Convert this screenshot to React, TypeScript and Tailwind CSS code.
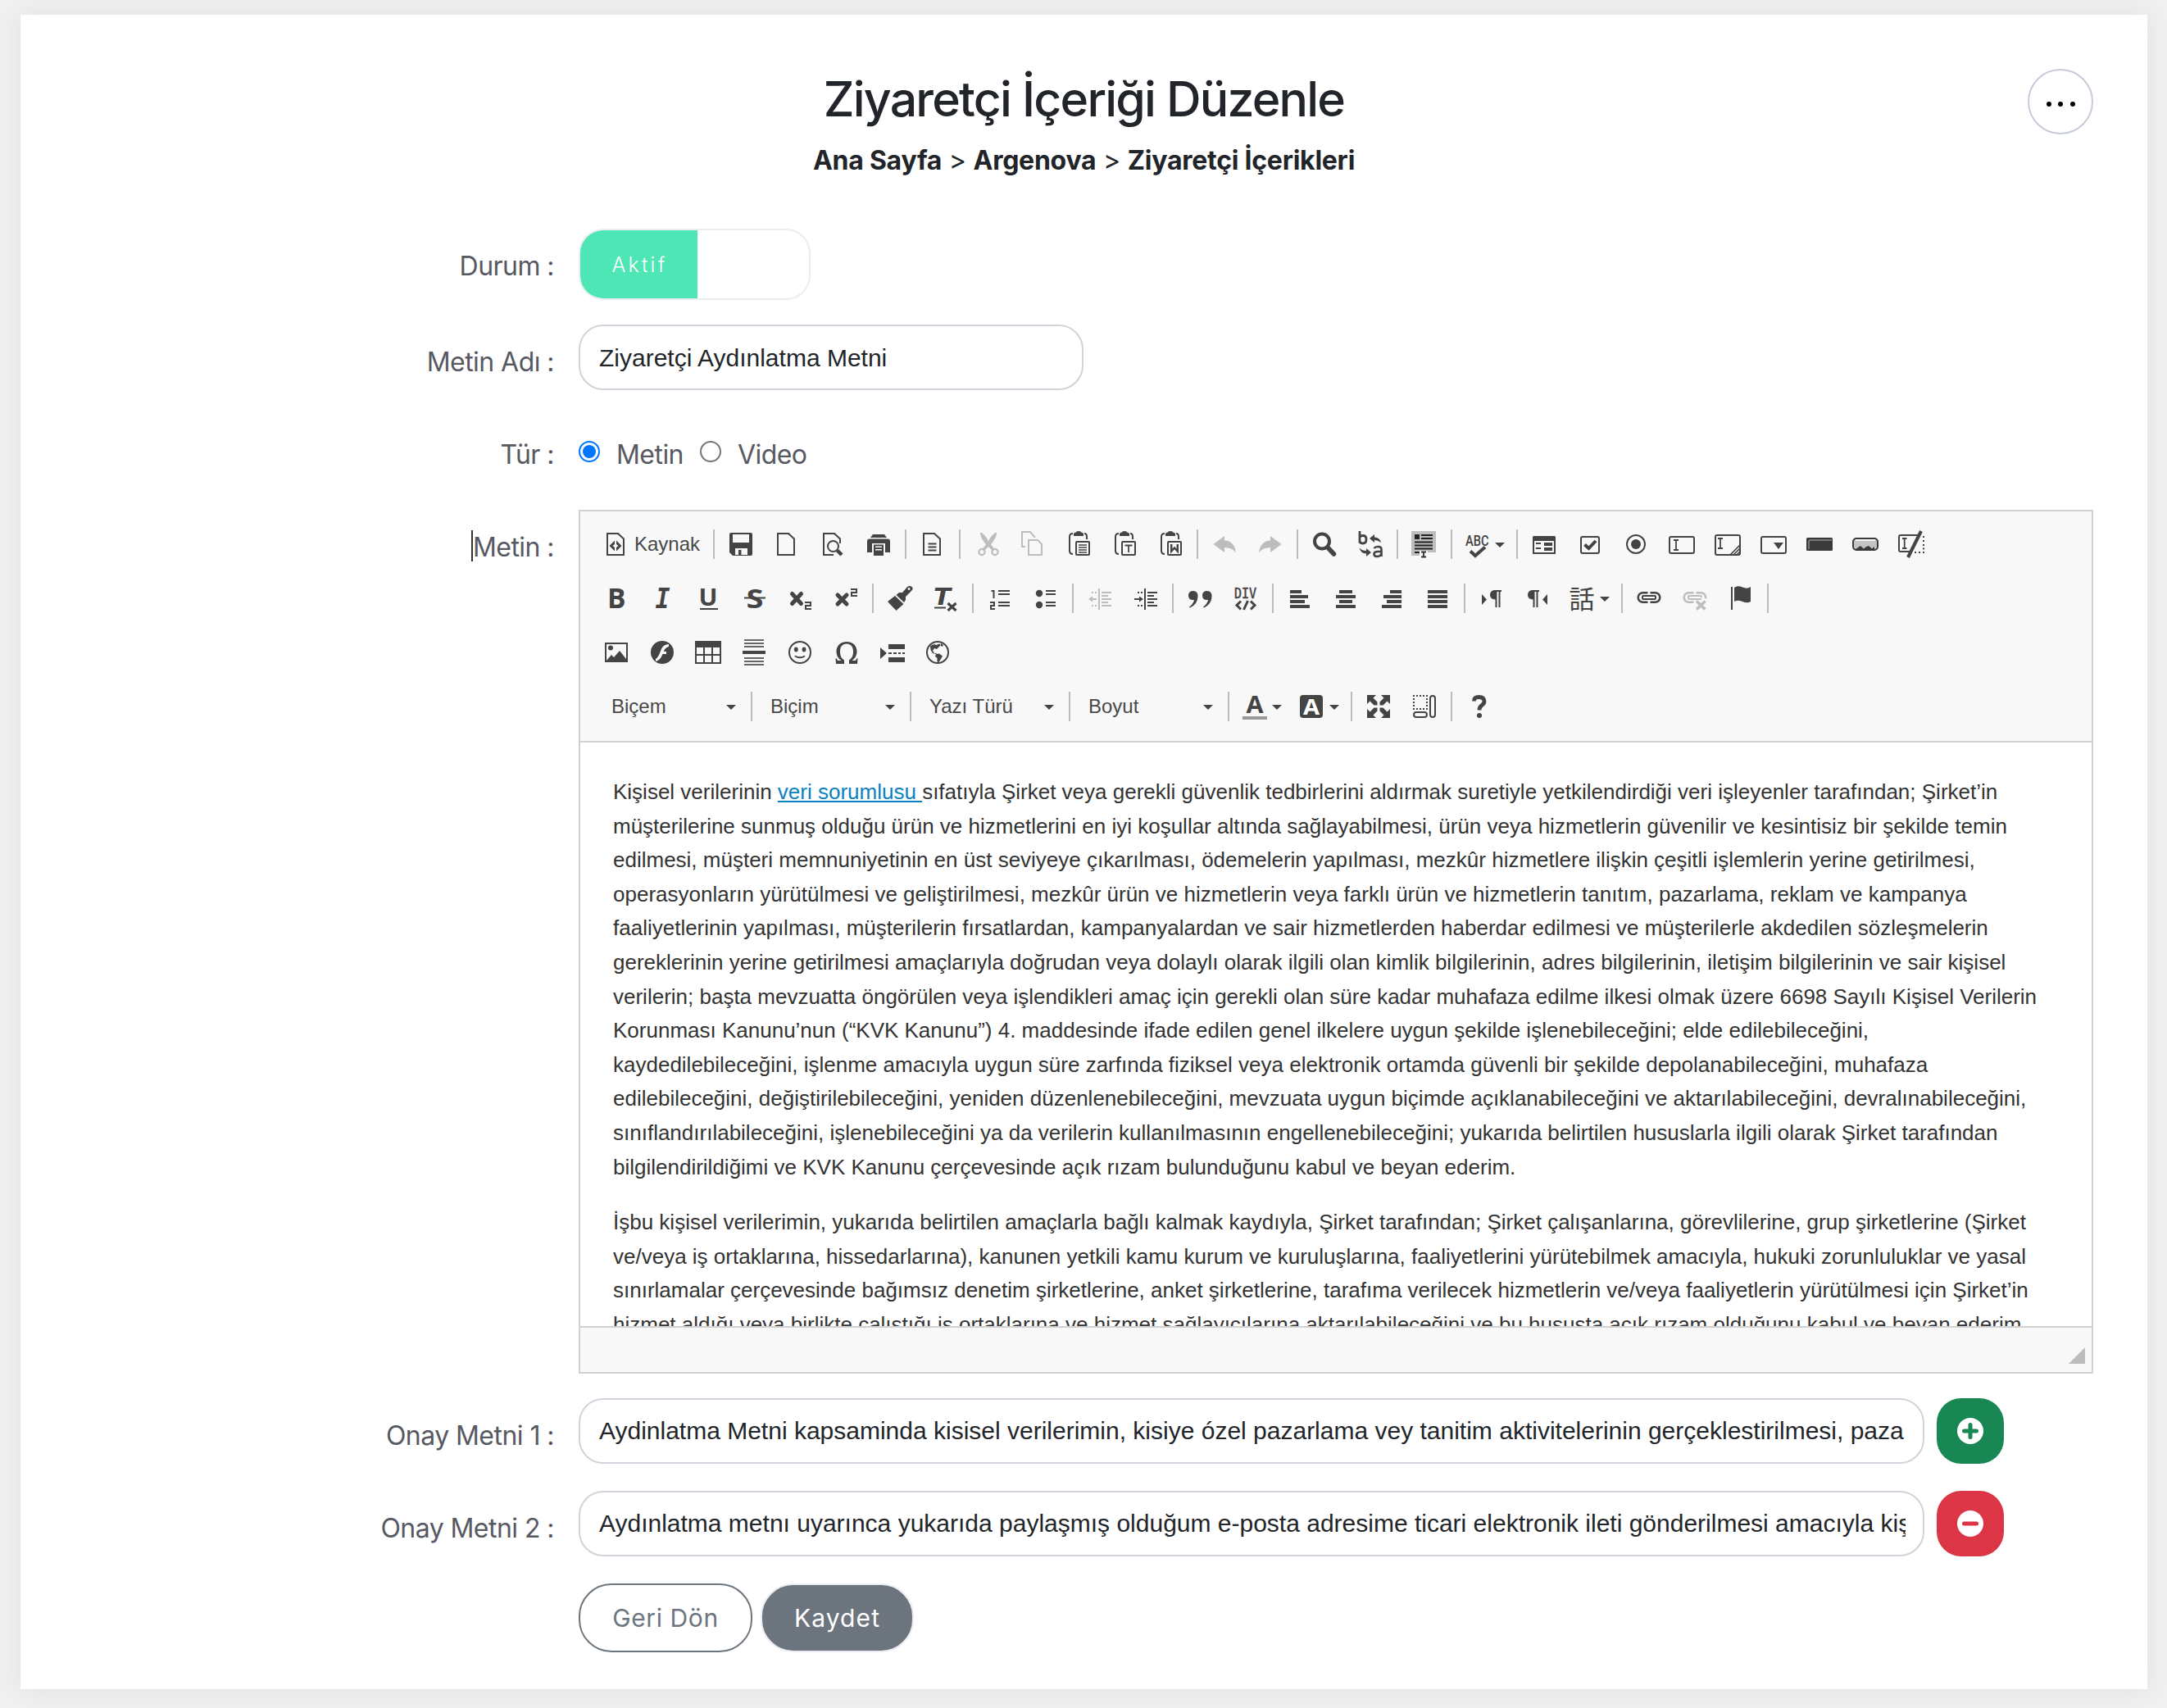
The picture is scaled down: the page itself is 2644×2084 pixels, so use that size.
import React from "react";

const MUTED = "#bdbdbd";
const PAPER = "#f8f8f8";

function Ic({ children, muted }: { children: React.ReactNode; muted?: boolean }) {
  return (
    <svg viewBox="0 0 32 32" className={muted ? "size-8 shrink-0 overflow-visible text-[#bdbdbd]" : "size-8 shrink-0 overflow-visible text-[#444444]"} fill="currentColor" stroke="none">
      {children}
    </svg>
  );
}

function S({ d, w = 2, c = "currentColor", cap = "butt" }: { d: string; w?: number; c?: string; cap?: "butt" | "round" }) {
  return <path d={d} fill="none" stroke={c} strokeWidth={w} strokeLinecap={cap} />;
}

function T({ x, y, s, w, children, f = "Open Sans", weight = 700, italic, c }: { x: number; y: number; s: number; w?: number; children: string; f?: string; weight?: number; italic?: boolean; c?: string }) {
  return (
    <text x={x} y={y} fontSize={s} fontFamily={`"${f}", sans-serif`} fontWeight={weight} fontStyle={italic ? "italic" : "normal"} textLength={w} lengthAdjust="spacingAndGlyphs" fill={c ?? "currentColor"}>
      {children}
    </text>
  );
}

const DOC = "M5 3H18L25 9.5V29H5Z";
const CLIP = "M10 3q1-1.5 3-1.5q0-1.5 3-1.5t3 1.5q2 0 3 1.5v3H10Z";
const BOARD = "M9 3Q5 3 5 7V24Q5 28 9 28M23 3Q26 3 26 7V10";

const icons: Record<string, React.ReactNode> = {
  source: <Ic><S d={DOC} /><path d="M14 11.5V16l-2.5 2 2.5 2v4.5L7.5 18ZM16 11.5V16l2.5 2-2.5 2v4.5L22.5 18Z" /></Ic>,
  save: <Ic><path fillRule="evenodd" d="M4 2H28Q30 2 30 4V28Q30 30 28 30H24V21H9V30H6L2 26V4Q2 2 4 2ZM6 4V14H26V4Z" /><path d="M13 23H16.5V30H13ZM9 29H24V30H9Z" /></Ic>,
  newpage: <Ic><S d={DOC} /></Ic>,
  preview: <Ic><S d="M17 29H5V3H18L25 9.5V15" /><circle cx="16.5" cy="18.5" r="6.5" fill={PAPER} stroke="currentColor" strokeWidth="2" /><S d="M21.5 23.5L27 29" w={4.5} /></Ic>,
  print: <Ic><path d="M9 4H23L26 8H6ZM5 9.5H27Q30 9.5 30 12.5V26H24V15H8V26H2V12.5Q2 9.5 5 9.5Z" /><path d="M10 16.5H22V30H10Z" /><path d="M12 18.5H20V20H12ZM12 22H20V23.5H12Z" fill={PAPER} /></Ic>,
  templates: <Ic><S d={DOC} /><S d="M10.5 15.5H20.5M10.5 19.5H20.5M10.5 23.5H20.5" /></Ic>,
  cut: <Ic muted><path d="M8 2L10 2Q17 8 18 13Q19 8 26 2L28 2Q29 6 21 16.5L26 22.5L23 24L18 19L13 24L10 22.5L15 16.5Q7 6 8 2Z" /><circle cx="10" cy="25.5" r="3.6" fill="none" stroke="currentColor" strokeWidth="2.2" /><circle cx="26" cy="25.5" r="3.6" fill="none" stroke="currentColor" strokeWidth="2.2" /></Ic>,
  copy: <Ic muted><S d="M7 19H3V1H13L19 8" /><S d="M11 11H22L27 16V29H11Z" /></Ic>,
  paste: <Ic><S d={BOARD} /><path d={CLIP} /><rect x="13" y="13" width="16" height="16" rx="1" fill="none" stroke="currentColor" strokeWidth="2" /><S d="M16 17H26M16 20H26M16 23H26M16 26H26" w={1.5} /></Ic>,
  pastetext: <Ic><S d={BOARD} /><path d={CLIP} /><rect x="13" y="13" width="16" height="16" rx="1" fill="none" stroke="currentColor" strokeWidth="2" /><S d="M16.5 17.5H25.5M21 17.5V26" w={1.8} /></Ic>,
  pasteword: <Ic><S d={BOARD} /><path d={CLIP} /><rect x="13" y="13" width="16" height="16" rx="1" fill="none" stroke="currentColor" strokeWidth="2" /><S d="M17.2 16V24.5L21 20.5L24.8 24.5V16" w={2.5} /></Ic>,
  undo: <Ic muted><path d="M2.5 16L16 6V11.5Q28 12 30 26Q25 20 16 20V26Z" /></Ic>,
  redo: <Ic muted><path d="M29.5 16L16 6V11.5Q4 12 2 26Q7 20 16 20V26Z" /></Ic>,
  find: <Ic><circle cx="13" cy="12.5" r="9" fill="none" stroke="currentColor" strokeWidth="4" /><S d="M20 20L27.5 28" w={5.5} cap="round" /></Ic>,
  replace: <Ic><S d="M3 0V14.5M3 7.5Q4 5.5 7 5.5Q11 5.5 11 10Q11 15 7 15Q4 15 3 13" w={2.8} /><S d="M20.5 21Q22 19 25 19Q29.5 19 29.5 22V31M29.5 25H25Q20.5 25 20.5 28Q20.5 31 24 31Q28 31 29.5 28" w={2.6} /><path d="M15 9L21 4V7.5Q28 8 29 14Q25 11 21 11V14ZM17 26L11 31V27.5Q4 27 2.5 20.5Q6 24 11 24V21Z" /></Ic>,
  selectall: <Ic><path d="M0 0H30V26H20V30H0Z" fill={MUTED} /><path d="M4 4H10V10H4ZM12 4H26V6H12ZM12 8H26V10H12ZM4 12.5H26V14.5H4ZM4 16.5H26V18.5H4ZM4 20.5H26V22.5H4ZM4 25H10V27H4Z" fill="#222" /><path d="M10 24H20V32H10Z" fill={PAPER} /><S d="M12 25.5H18M12 31.5H18M15 25.5V31.5" c="#333" w={1.8} /></Ic>,
  spell: <Ic><T x={0} y={18} s={19} w={28.5} f="Roboto" weight={500}>ABC</T><S d="M6 24.5L12 30L24 19.5" w={4} /></Ic>,
  form: <Ic><path fillRule="evenodd" d="M3 6H29L30 7V28H2V7ZM4 12V26H28V12Z" /><path d="M6 14H12V16H6ZM6 20H12V22H6ZM16 14H26V18H16ZM16 20H26V24H16Z" /></Ic>,
  checkbox: <Ic><rect x="5" y="7" width="22" height="20" rx="2" fill="none" stroke="currentColor" strokeWidth="2" /><S d="M9.5 16.5L14.5 21L23 12" w={4} /></Ic>,
  radio: <Ic><circle cx="16" cy="16" r="11" fill="none" stroke="currentColor" strokeWidth="2" /><circle cx="16" cy="16" r="6" /></Ic>,
  textfield: <Ic><rect x="1" y="7" width="30" height="20" rx="2" fill="none" stroke="currentColor" strokeWidth="2" /><S d="M6 11H12M6 23H12M9 11V23" w={1.8} /></Ic>,
  textarea: <Ic><rect x="1" y="5" width="30" height="24" rx="2" fill="none" stroke="currentColor" strokeWidth="2" /><S d="M4 9H10M4 21H10M7 9V21" w={1.8} /><S d="M19 29L31 17M23 29L31 21M27 29L31 25" w={1.7} /></Ic>,
  select: <Ic><rect x="1" y="7" width="30" height="20" rx="2" fill="none" stroke="currentColor" strokeWidth="2" /><path d="M16 14H28L22 22Z" /></Ic>,
  button: <Ic><rect x="0" y="8" width="32" height="16" rx="1.5" fill="#3a3a3a" /><S d="M3 22V13Q3 11 5 11H31" c="#8a8a8a" w={1.5} /></Ic>,
  imagebutton: <Ic><rect x="1" y="9" width="30" height="14" rx="4" fill="#c4c4c4" stroke="#3a3a3a" strokeWidth="2" /><path d="M4 10H28V12H4Z" fill={PAPER} /><path d="M4 22L7 20L10 18L14 21.500L17 19L20 18L24 21.500L27 19V24H4Z" fill="#3a3a3a" /></Ic>,
  hidden: <Ic><S d="M26 5H3Q1 5 1 7V23Q1 25 3 25H15" /><S d="M5 9H10.5M5 21H10.5M7.7 9V21" w={1.8} /><S d="M12 32L28 0" w={4} /><path d="M30 6H32V8H30ZM30 11H32V13H30ZM30 16H32V18H30ZM30 20.5H32V22.5H30ZM30 25H32V27H30ZM25 25H27V27H25ZM20 25H22V27H20Z" /></Ic>,
  bold: <Ic><T x={5} y={28} s={33.5}>B</T></Ic>,
  italic: <Ic><T x={7.5} y={28} s={33} w={18} f="DejaVu Sans Mono" italic>I</T></Ic>,
  underline: <Ic><T x={4.5} y={25} s={29} w={23}>U</T><path d="M6 28H28V30H6Z" /></Ic>,
  strike: <Ic><T x={6.5} y={27.5} s={33} w={21}>S</T><path d="M4 14.5H30V16.5H4Z" /></Ic>,
  sub: <Ic><S d="M6.5 10.5L17.500 22.5M17.500 10.5L6.5 22.5" w={5} cap="round" /><S d="M22 21H29V25H23V29H30" w={2} /></Ic>,
  sup: <Ic><S d="M6 12L17 23M17 12L6 23" w={5} cap="round" /><S d="M22 5H29V9H23V13H30" w={2} /></Ic>,
  brush: <Ic><path d="M1 20L10 13L20.5 23L11.5 31Z" /><path fillRule="evenodd" d="M11.5 12L15 9H19L25 2Q28 0 30.5 2T30 7L23 14V18L21 21ZM27 3A1.5 1.5 0 1 0 27.1 3Z" /></Ic>,
  removeformat: <Ic><T x={1} y={24} s={28} f="DejaVu Sans" w={21} italic>T</T><path d="M2 26.5H16V28.5H2Z" /><S d="M18.5 22L28.5 31M28.5 22L18.5 31" w={3.2} /></Ic>,
  numbered: <Ic><S d="M5.5 7H8.5V16M4 21H9V25H5V29H10" /><path d="M14 6H28V8H14ZM14 10H28V12H14ZM14 20H28V22H14ZM14 24H28V26H14Z" /></Ic>,
  bulleted: <Ic><circle cx="8" cy="10" r="4.2" /><circle cx="8" cy="24" r="4.2" /><path d="M16 6H28V8H16ZM16 10H28V12H16ZM16 20H28V22H16ZM16 24H28V26H16Z" /></Ic>,
  outdent: <Ic muted><path d="M14 4H16V30H14ZM18 8H30V10H18ZM18 12H26V14H18ZM18 16H30V18H18ZM18 20H26V22H18ZM18 24H30V26H18ZM2 17L7 13.5V16H12V18H7V20.5ZM6 8H8V10H6ZM10 8H12V10H10ZM6 24H8V26H6ZM10 24H12V26H10Z" /></Ic>,
  indent: <Ic><path d="M14 4H16V30H14ZM18 8H30V10H18ZM18 12H26V14H18ZM18 16H30V18H18ZM18 20H26V22H18ZM18 24H30V26H18ZM13 17L8 13.5V16H2V18H8V20.5ZM6 8H8V10H6ZM10 8H12V10H10ZM6 24H8V26H6ZM10 24H12V26H10Z" /></Ic>,
  quote: <Ic><path d="M8 7Q2 7 2 12.5T7.5 18H9Q8 23 3 26.5L4 27.5Q13.5 23 13.5 13.5Q13.5 7 8 7ZM25 7Q19 7 19 12.5T24.5 18H26Q25 23 20 26.5L21 27.5Q30.5 23 30.5 13.5Q30.5 7 25 7Z" /></Ic>,
  div: <Ic><g stroke="currentColor" strokeWidth="0.6"><T x={2} y={16} s={18} w={27} f="DejaVu Sans Mono" weight={400}>DIV</T></g><S d="M10 19.5L5 24.5L10 29.5M22 19.5L27 24.5L22 29.5" w={3} /><S d="M13.5 30L18.5 19" w={3} /></Ic>,
  left: <Ic><path d="M4 6H18V10H4ZM4 12H26V16H4ZM4 18H22V22H4ZM4 24H28V28H4Z" /></Ic>,
  center: <Ic><path d="M8 6H24V10H8ZM4 12H28V16H4ZM8 18H24V22H8ZM4 24H28V28H4Z" /></Ic>,
  right: <Ic><path d="M14 6H28V10H14ZM6 12H28V16H6ZM10 18H28V22H10ZM4 24H28V28H4Z" /></Ic>,
  justify: <Ic><path d="M4 6H28V10H4ZM4 12H28V16H4ZM4 18H28V22H4ZM4 24H28V28H4Z" /></Ic>,
  ltr: <Ic><path d="M4 11L10 17.5L4 24ZM19 6H28V8H26.5V27H24.5V8H22.5V27H20.5V17.5Q14 17 14 12T19 6Z" /></Ic>,
  rtl: <Ic><path d="M28 11L22 17.5L28 24ZM9 6H18V8H16.5V27H14.5V8H12.5V27H10.5V17.5Q4 17 4 12T9 6Z" /></Ic>,
  language: <Ic><T x={-1.5} y={27.5} s={31} f="Noto Sans CJK JP" weight={400}>話</T></Ic>,
  link: <Ic><S d="M14.5 9.2H8.5a5.8 5.8 0 0 0 0 11.6H14.5M17.5 9.2H23.5a5.8 5.8 0 0 1 0 11.6H17.5" w={2.6} /><rect x="8" y="13" width="16" height="4" rx="1" fill="none" stroke="currentColor" strokeWidth="2" /></Ic>,
  unlink: <Ic muted><S d="M14.5 9.2H8.5a5.8 5.8 0 0 0 0 11.6H14.5M17.5 9.2H23.5a5.8 5.8 0 0 1 5.5 7" w={2.6} /><path d="M24 17H9Q8 17 8 16V14Q8 13 9 13H23Q24 13 24 15" fill="none" stroke="currentColor" strokeWidth="2" /><S d="M18 19.5L28.5 29.5M28.5 19.5L18 29.5" w={3.6} /></Ic>,
  anchor: <Ic><path d="M4 2H6V30H4ZM8 3Q12 0 18 2.5T28 2V20Q24 22.5 18 20T8 20Z" /></Ic>,
  image: <Ic><path fillRule="evenodd" d="M2 4H30V28H2ZM4 6V26L10 19L13 22L20 14L28 24V6Z" /><circle cx="9" cy="10.5" r="3" /></Ic>,
  flash: <Ic><circle cx="16" cy="16" r="14" /><path d="M24 6Q17 6 14.5 13Q11.5 22 8 24V27Q13.5 26 16.5 18H21V15H17.8Q19.5 10 24 9Z" fill={PAPER} /></Ic>,
  table: <Ic><path fillRule="evenodd" d="M0 2H32V30H0ZM2 10V18H10V10ZM12 10V18H20V10ZM22 10V18H30V10ZM2 20V28H10V20ZM12 20V28H20V20ZM22 20V28H30V20Z" /></Ic>,
  hr: <Ic><path d="M4 0H28V2H4ZM4 4H28V6H4ZM4 8H28V10H4ZM4 22H28V24H4ZM4 26H28V28H4ZM4 30H28V32H4Z" fill="#666" /><path d="M2 14H30V18H2Z" /></Ic>,
  smiley: <Ic><circle cx="16" cy="16" r="13" fill="none" stroke="currentColor" strokeWidth="2" /><ellipse cx="11.3" cy="12.5" rx="2.4" ry="3" /><ellipse cx="21" cy="12.5" rx="2.4" ry="3" /><S d="M10 20.5Q16 24 22 20.5" w={2} /></Ic>,
  omega: <Ic><path d="M17 3C9 3 4.5 8 4.5 15C4.5 20 7 23.5 10.5 26H6.5Q5.5 26 5 23.5H3.5L4 30H14V25.5C10.5 23 9 20 9 15C9 9 12 5.5 17 5.5S25 9 25 15C25 20 23.5 23 20 25.5V30H30L30.5 23.5H29Q28.5 26 27.5 26H23.5C27 23.5 29.5 20 29.5 15C29.5 8 25 3 17 3Z" /></Ic>,
  pagebreak: <Ic><path d="M2 10L10 17L2 24ZM12 6H32V12H12ZM12 22H32V28H12ZM12 16H16V18H12ZM18 16H22V18H18ZM24 16H27V18H24ZM29 16H32V18H29Z" /></Ic>,
  iframe: <Ic><circle cx="16" cy="16" r="13" fill="none" stroke="currentColor" strokeWidth="2" /><path d="M7 8L12 6L14 7L18 5.500L20 7L17 10L15 12L12 11L10 14L12 17H15L14 18L10 17L7.500 13ZM14 18L18 17.500L22 20.500L20 24L17 28.500L15.500 27L15.500 23L13 21ZM20 5L23 7L22 9L20 8Z" /></Ic>,
  color: <Ic><T x={4.5} y={24} s={28} w={21}>A</T><path d="M0 28H30V32H0Z" fill="#999" /></Ic>,
  bgcolor: <Ic><rect x="0" y="2" width="28" height="28" rx="4" /><T x={4} y={25.5} s={27} w={20} c="#fff">A</T></Ic>,
  maximize: <Ic><path d="M2 2H13L9.5 5.5L14.5 10.5V14.5H10.5L5.5 9.5L2 13ZM30 2V13L26.5 9.5L21.5 14.5H17.5V10.5L22.5 5.5L19 2ZM2 30V19L5.5 22.5L10.5 17.5H14.5V21.5L9.5 26.5L13 30ZM30 30H19L22.5 26.5L17.5 21.5V17.5H21.5L26.5 22.5L30 19Z" /></Ic>,
  blocks: <Ic><rect x="3" y="3" width="16" height="16" fill="none" stroke="currentColor" strokeWidth="2" strokeDasharray="2 2" strokeDashoffset="1" /><rect x="23" y="3" width="6" height="26" rx="3" fill="none" stroke="currentColor" strokeWidth="2" /><rect x="3" y="23" width="16" height="6" rx="3" fill="none" stroke="currentColor" strokeWidth="2" /></Ic>,
  about: <Ic><S d="M10.5 9.5Q10.5 4.5 16.5 4.5T23 9.5Q23 12.5 20 14.5T17 20.5" w={4.8} /><circle cx="17" cy="27" r="3" /></Ic>,
};

const row1 = "source | save newpage preview print | templates | cut copy paste pastetext pasteword | undo redo | find replace | selectall | spell | form checkbox radio textfield textarea select button imagebutton hidden".split(" ");
const row2 = "bold italic underline strike sub sup | brush removeformat | numbered bulleted | outdent indent | quote div | left center right justify | ltr rtl language | link unlink anchor |".split(" ");
const row3 = "image flash table hr smiley omega pagebreak iframe".split(" ");
const row4 = "color bgcolor | maximize blocks | about".split(" ");

function Arrow() {
  return (
    <svg viewBox="0 0 12 6" className="mt-px h-1.5 w-3 shrink-0 fill-[#444444]">
      <path d="M0 0H12L6 6Z" />
    </svg>
  );
}

function Tools({ items }: { items: string[] }) {
  return (
    <>
      {items.map((name, i) =>
        name === "|" ? (
          <div key={i} className="mx-1 h-9 w-0.5 bg-[#bcbcbc]" />
        ) : (
          <div key={i} className="flex h-9 shrink-0 items-center px-3">
            {icons[name]}
            {name === "source" && <span className="ml-[6px] w-20 font-['Liberation_Sans'] text-[24px] leading-9 text-[#484848]">Kaynak</span>}
            {["spell", "language", "color", "bgcolor"].includes(name) && (
              <span className={name === "color" ? "ml-1 -mr-0.5 flex" : "-mr-0.5 ml-1 flex"}>
                <Arrow />
              </span>
            )}
          </div>
        ),
      )}
    </>
  );
}

const para1: React.ReactNode[] = [
  <>Kişisel verilerinin <a className="text-[#0782c1] underline decoration-2 underline-offset-2">veri sorumlusu </a>sıfatıyla Şirket veya gerekli güvenlik tedbirlerini aldırmak suretiyle yetkilendirdiği veri işleyenler tarafından; Şirket’in</>,
  "müşterilerine sunmuş olduğu ürün ve hizmetlerini en iyi koşullar altında sağlayabilmesi, ürün veya hizmetlerin güvenilir ve kesintisiz bir şekilde temin",
  "edilmesi, müşteri memnuniyetinin en üst seviyeye çıkarılması, ödemelerin yapılması, mezkûr hizmetlere ilişkin çeşitli işlemlerin yerine getirilmesi,",
  "operasyonların yürütülmesi ve geliştirilmesi, mezkûr ürün ve hizmetlerin veya farklı ürün ve hizmetlerin tanıtım, pazarlama, reklam ve kampanya",
  "faaliyetlerinin yapılması, müşterilerin fırsatlardan, kampanyalardan ve sair hizmetlerden haberdar edilmesi ve müşterilerle akdedilen sözleşmelerin",
  "gereklerinin yerine getirilmesi amaçlarıyla doğrudan veya dolaylı olarak ilgili olan kimlik bilgilerinin, adres bilgilerinin, iletişim bilgilerinin ve sair kişisel",
  "verilerin; başta mevzuatta öngörülen veya işlendikleri amaç için gerekli olan süre kadar muhafaza edilme ilkesi olmak üzere 6698 Sayılı Kişisel Verilerin",
  "Korunması Kanunu’nun (“KVK Kanunu”) 4. maddesinde ifade edilen genel ilkelere uygun şekilde işlenebileceğini; elde edilebileceğini,",
  "kaydedilebileceğini, işlenme amacıyla uygun süre zarfında fiziksel veya elektronik ortamda güvenli bir şekilde depolanabileceğini, muhafaza",
  "edilebileceğini, değiştirilebileceğini, yeniden düzenlenebileceğini, mevzuata uygun biçimde açıklanabileceğini ve aktarılabileceğini, devralınabileceğini,",
  "sınıflandırılabileceğini, işlenebileceğini ya da verilerin kullanılmasının engellenebileceğini; yukarıda belirtilen hususlarla ilgili olarak Şirket tarafından",
  "bilgilendirildiğimi ve KVK Kanunu çerçevesinde açık rızam bulunduğunu kabul ve beyan ederim.",
];
const para2: React.ReactNode[] = [
  "İşbu kişisel verilerimin, yukarıda belirtilen amaçlarla bağlı kalmak kaydıyla, Şirket tarafından; Şirket çalışanlarına, görevlilerine, grup şirketlerine (Şirket",
  "ve/veya iş ortaklarına, hissedarlarına), kanunen yetkili kamu kurum ve kuruluşlarına, faaliyetlerini yürütebilmek amacıyla, hukuki zorunluluklar ve yasal",
  "sınırlamalar çerçevesinde bağımsız denetim şirketlerine, anket şirketlerine, tarafıma verilecek hizmetlerin ve/veya faaliyetlerin yürütülmesi için Şirket’in",
  "hizmet aldığı veya birlikte çalıştığı iş ortaklarına ve hizmet sağlayıcılarına aktarılabileceğini ve bu hususta açık rızam olduğunu kabul ve beyan ederim.",
];

function Lines({ lines }: { lines: React.ReactNode[] }) {
  return (
    <p className="mb-[26px]">
      {lines.map((l, i) => (
        <span key={i} className="block whitespace-pre">{l}</span>
      ))}
    </p>
  );
}

function Row({ label, caret, className, children }: { label?: string; caret?: boolean; className: string; children: React.ReactNode }) {
  return (
    <div className={`flex items-start ${className}`}>
      <div className="mr-[30px] flex w-[651px] shrink-0 justify-end pt-[22px] font-['Inter'] text-[32px] leading-[48px] tracking-[-0.55px] text-[#575962]">
        {caret && <span className="mt-[3px] h-[38px] w-0.5 bg-[#333]" />}
        <span>{label}</span>
      </div>
      {children}
    </div>
  );
}

function Approval({ text }: { text: string }) {
  return (
    <div className="flex h-20 w-[1642px] items-center rounded-[30px] border-2 border-[#ced4da] pl-[23px] pr-[21px] font-['Liberation_Sans'] text-[30px] text-[#212529]">
      <span className="block w-full overflow-hidden whitespace-nowrap leading-[48px]">{text}</span>
    </div>
  );
}

export default function App() {
  return (
    <div className="h-[2084px] w-[2644px] overflow-hidden bg-[#f0f0f0] pl-[25px] pt-[18px]">
      <div className="relative flex h-[2043px] w-[2595px] flex-col bg-white shadow-[0_0_30px_2px_rgba(0,0,0,0.06)]">
        <div className="absolute right-[66px] top-[66px] flex size-20 items-center justify-center gap-[8.5px] rounded-full border-2 border-[#c5cbd9] pt-[5px]">
          <span className="size-[6px] rounded-full bg-black" />
          <span className="size-[6px] rounded-full bg-black" />
          <span className="size-[6px] rounded-full bg-black" />
        </div>
        <h1 className="mt-[65px] h-[76px] text-center font-['Inter'] text-[59px] font-medium leading-[76px] tracking-[-1.8px] text-[#212529]">Ziyaretçi İçeriği Düzenle</h1>
        <p className="mt-[13px] h-12 text-center font-['Inter'] text-[32px] leading-[48px] tracking-[-0.25px] text-[#212529]">
          <b>Ana Sayfa</b> &gt; <b>Argenova</b> &gt; <b>Ziyaretçi İçerikleri</b>
        </p>

        <Row label="Durum :" className="mt-[59px] h-[87px]">
          <div className="flex h-[87px] w-[283px] overflow-hidden rounded-[30px] border-2 border-[#ebedf2]">
            <div className="flex w-[143px] items-center justify-center bg-[#4de6b4] pl-0.5 pt-0.5 font-['Inter'] text-[25px] font-light tracking-[3.2px] text-white">Aktif</div>
          </div>
        </Row>

        <Row label="Metin Adı :" className="mt-[30px] h-20">
          <div className="flex h-20 w-[616px] items-center rounded-[30px] border-2 border-[#ced4da] pl-[23px] font-['Liberation_Sans'] text-[30px] text-[#212529]">Ziyaretçi Aydınlatma Metni</div>
        </Row>

        <Row label="Tür :" className="mt-[33px] h-[68px]">
          <div className="flex items-center pt-[22px] font-['Inter'] text-[32px] leading-[48px] tracking-[-0.55px] text-[#575962]">
            <span className="mb-2 mr-5 flex size-[26px] items-center justify-center rounded-full border-2 border-[#0075ff]">
              <span className="size-4 rounded-full bg-[#0075ff]" />
            </span>
            Metin
            <span className="mb-2 ml-5 mr-5 size-[26px] rounded-full border-2 border-[#767676]" />
            Video
          </div>
        </Row>

        <Row label="Metin :" caret className="mt-[45px] h-[1054px]">
          <div className="flex h-[1054px] w-[1848px] flex-col border-2 border-[#d1d1d1] font-['Liberation_Sans']">
            <div className="h-[282px] shrink-0 border-b-2 border-[#d1d1d1] bg-[#f8f8f8] pl-4 pt-[22px]">
              <div className="mb-[30px] flex h-9"><Tools items={row1} /></div>
              <div className="mb-[30px] flex h-9"><Tools items={row2} /></div>
              <div className="mb-[30px] flex h-9"><Tools items={row3} /></div>
              <div className="flex h-9 pl-1">
                {["Biçem", "Biçim", "Yazı Türü", "Boyut"].map((t) => (
                  <div key={t} className="flex">
                    <div className="flex w-[184px] items-center justify-between pl-[18px] pr-[14px] text-[24px] leading-9 text-[#484848]">
                      {t}
                      <Arrow />
                    </div>
                    <div className="mx-1 h-9 w-0.5 bg-[#bcbcbc]" />
                  </div>
                ))}
                <Tools items={row4} />
              </div>
            </div>
            <div className="min-h-0 flex-1 overflow-hidden px-10 pt-10 text-[26px] leading-[41.6px] text-[#333]">
              <Lines lines={para1} />
              <Lines lines={para2} />
            </div>
            <div className="flex h-[56px] shrink-0 items-end justify-end border-t-2 border-[#d1d1d1] bg-[#f8f8f8] pb-[10px] pr-2">
              <svg viewBox="0 0 20 20" className="size-5 fill-[#bcbcbc]"><path d="M20 0V20H0Z" /></svg>
            </div>
          </div>
        </Row>

        <Row label="Onay Metni 1 :" className="mt-[30px] h-20">
          <Approval text="Aydinlatma Metni kapsaminda kisisel verilerimin, kisiye ózel pazarlama vey tanitim aktivitelerinin gerçeklestirilmesi, paza" />
          <div className="ml-[15px] flex h-20 w-[82px] items-center justify-center rounded-[30px] bg-[#198754]">
            <svg viewBox="0 0 32 32" className="size-8"><circle cx="16" cy="16" r="16" fill="#fff" /><path d="M16 8.5V23.5M8.5 16H23.5" stroke="#198754" strokeWidth="5" strokeLinecap="round" /></svg>
          </div>
        </Row>
        <Row label="Onay Metni 2 :" className="mt-[33px] h-20">
          <Approval text="Aydınlatma metnı uyarınca yukarıda paylaşmış olduğum e-posta adresime ticari elektronik ileti gönderilmesi amacıyla kiş" />
          <div className="ml-[15px] flex h-20 w-[82px] items-center justify-center rounded-[30px] bg-[#dc3545]">
            <svg viewBox="0 0 32 32" className="size-8"><circle cx="16" cy="16" r="16" fill="#fff" /><path d="M8.5 16H23.5" stroke="#dc3545" strokeWidth="5" strokeLinecap="round" /></svg>
          </div>
        </Row>
        <Row className="mt-[33px] h-[84px]">
          <div className="flex h-[84px] w-[212px] items-center justify-center rounded-[40px] border-2 border-[#6c757d] font-['Inter'] text-[30px] tracking-[0.6px] text-[#6c757d]">Geri Dön</div>
          <div className="ml-[10px] flex h-[84px] w-[187px] items-center justify-center rounded-[40px] border-2 border-[#ebedf2] bg-[#6c757d] font-['Inter'] text-[30px] tracking-[1.1px] text-white">Kaydet</div>
        </Row>
      </div>
    </div>
  );
}
